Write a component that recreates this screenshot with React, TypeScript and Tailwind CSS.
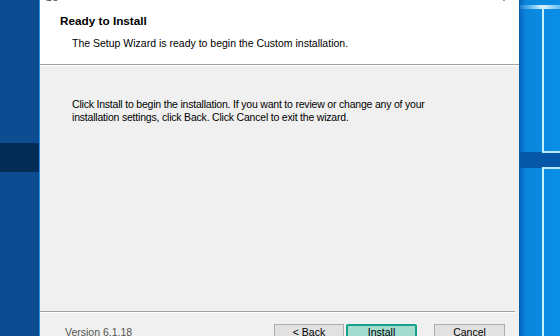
import React from 'react';

const font = { fontFamily: 'Tahoma, "Liberation Sans", Arial, sans-serif' };

function WinLogoSide() {
  return (
    <svg width="41" height="336" viewBox="0 0 41 336" className="block">
      <defs>
        <linearGradient id="bgr" x1="0" y1="0" x2="1" y2="0">
          <stop offset="0" stopColor="#0768c2" />
          <stop offset="0.15" stopColor="#0a86dc" />
          <stop offset="1" stopColor="#0a8fe6" />
        </linearGradient>
        <linearGradient id="glow" x1="0" y1="0" x2="1" y2="0">
          <stop offset="0" stopColor="#7fd0ff" stopOpacity="0.2" />
          <stop offset="0.55" stopColor="#e6f9ff" stopOpacity="1" />
          <stop offset="1" stopColor="#9fdcff" stopOpacity="0.6" />
        </linearGradient>
      </defs>
      <rect width="41" height="336" fill="url(#bgr)" />
      <rect x="0" y="152" width="41" height="16" fill="#0657a8" />
      <rect x="0" y="5" width="41" height="4" fill="url(#glow)" />
      <rect x="22" y="5" width="2" height="148" fill="#c8f0ff" />
      <rect x="22" y="151" width="19" height="2" fill="#b6e9ff" />
      <rect x="22" y="167" width="19" height="2" fill="#b6e9ff" />
      <rect x="22" y="167" width="2" height="169" fill="#c8f0ff" />
    </svg>
  );
}

export default function App() {
  return (
    <div className="flex h-[336px] w-[560px] overflow-hidden text-[10.5px] text-black" style={font}>
      {/* desktop on the left */}
      <div className="flex w-[39px] shrink-0 flex-col">
        <div className="h-[143px] shrink-0 bg-[#0b4d90]" />
        <div className="h-[29px] shrink-0 bg-[#052c57]" />
        <div className="flex-1 bg-[#0b4d90]" />
      </div>
      <div className="w-px shrink-0 bg-[#2d93e8]" />

      {/* wizard dialog */}
      <div className="flex w-[479px] shrink-0 flex-col bg-[#f0f0f0]">
        <div className="h-[64px] shrink-0 overflow-hidden bg-white">
          <div className="-mt-[9px] flex h-[12px] items-center justify-between pl-[5px] pr-[12px] text-[11px] text-[#444]">
            <span>Se</span>
            <span>?</span>
          </div>
          <div className="pl-[20px] pt-[11px] text-[11.75px] font-bold leading-[13px]">Ready to Install</div>
          <div className="pl-[32px] pt-[10px] leading-[13px]">The Setup Wizard is ready to begin the Custom installation.</div>
        </div>
        <div className="h-px shrink-0 bg-[#a0a0a0]" />
        <div className="h-px shrink-0 bg-white" />

        <div className="h-[245px] shrink-0 pl-[32px] pt-[32px] leading-[13px] tracking-[-0.2px]">
          Click Install to begin the installation. If you want to review or change any of your
          <br />
          installation settings, click Back. Click Cancel to exit the wizard.
        </div>

        <div className="mr-[4px] h-px shrink-0 bg-[#a0a0a0]" />
        <div className="mr-[4px] h-px shrink-0 bg-white" />

        <div className="flex shrink-0 items-start pt-[11px]">
          <div className="pl-[25px] pt-[2px] leading-[13px] text-[#555]">Version 6.1.18</div>
          <div className="ml-auto flex gap-[2px] pr-[14px]">
            <button className="flex h-[23px] w-[70px] items-start justify-center border border-[#adadad] bg-[#e1e1e1] pt-[1px] leading-[13px]">&lt; Back</button>
            <button className="flex h-[23px] w-[71px] items-start justify-center rounded-[2px] border-2 border-[#14a08b] bg-[#a3dccf] leading-[13px]">Install</button>
            <button className="ml-[15px] flex h-[23px] w-[71px] items-start justify-center border border-[#adadad] bg-[#e1e1e1] pt-[1px] leading-[13px]">Cancel</button>
          </div>
        </div>
      </div>

      {/* desktop on the right */}
      <div className="w-px shrink-0 bg-[#0a5aa8]" />
      <div className="flex-1">
        <WinLogoSide />
      </div>
    </div>
  );
}
